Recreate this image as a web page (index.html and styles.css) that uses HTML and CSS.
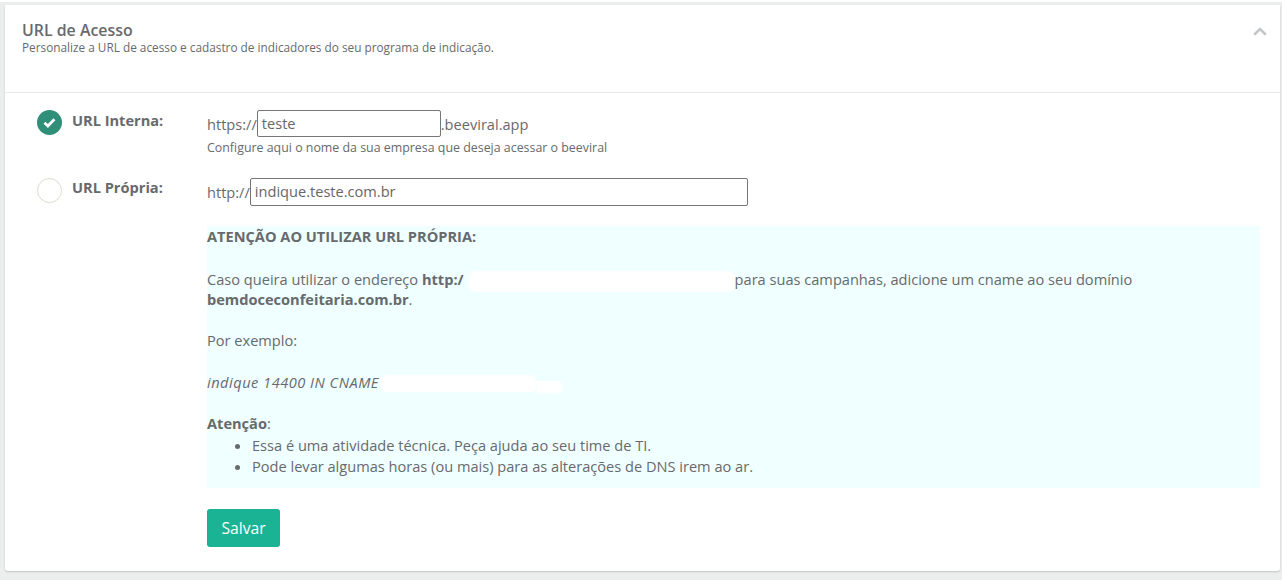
FILE: index.html
```html
<!DOCTYPE html>
<html lang="pt-BR">
<head>
<meta charset="utf-8">
<title>URL de Acesso</title>
<link rel="stylesheet" href="styles.css">
</head>
<body>
<section class="card">
  <header class="card-head">
    <div>
      <h5 class="card-title">URL de Acesso</h5>
      <p class="card-sub">Personalize a URL de acesso e cadastro de indicadores do seu programa de indicação.</p>
    </div>
    <svg class="chevron" width="14" height="9" viewBox="0 0 14 9"><path d="M1.200 7.700 7 2l5.800 5.700" fill="none" stroke="#c4c6c9" stroke-width="2.600"/></svg>
  </header>
  <div class="card-body">
    <div class="row row-internal">
      <div class="option">
        <span class="radio radio-on"><svg width="25" height="25" viewBox="0 0 25 25"><path d="M7.500 12.800l3.400 3.200 6.500-6.700" fill="none" stroke="#fff" stroke-width="2.700"/></svg></span>
        <label class="option-label">URL Interna:</label>
      </div>
      <div class="field">
        <div class="url-line">
          <span>https://</span><span class="input input-short">teste</span><span>.beeviral.app</span>
        </div>
        <p class="hint">Configure aqui o nome da sua empresa que deseja acessar o beeviral</p>
      </div>
    </div>
    <div class="row row-own">
      <div class="option">
        <span class="radio"></span>
        <label class="option-label option-label-own">URL Própria:</label>
      </div>
      <div class="field">
        <div class="url-line">
          <span>http://</span><span class="input input-long">indique.teste.com.br</span>
        </div>
      </div>
    </div>
    <div class="notice">
      <p class="notice-head"><strong>ATENÇÃO AO UTILIZAR URL PRÓPRIA:</strong></p>
      <p class="notice-text">Caso queira utilizar o endereço <strong>http:/</strong><span class="redact redact-url"></span>para suas campanhas, adicione um cname ao seu domínio<br><strong>bemdoceconfeitaria.com.br</strong>.</p>
      <p class="notice-text">Por exemplo:</p>
      <p class="notice-text"><em class="cname">indique 14400 IN CNAME</em><span class="redact redact-cname"></span><span class="redact redact-tail"></span></p>
      <p class="notice-text"><strong>Atenção</strong>:</p>
      <ul class="notice-list">
        <li>Essa é uma atividade técnica. Peça ajuda ao seu time de TI.</li>
        <li>Pode levar algumas horas (ou mais) para as alterações de DNS irem ao ar.</li>
      </ul>
    </div>
    <button class="save" type="button">Salvar</button>
  </div>
</section>
</body>
</html>
```
FILE: styles.css
```css
* { box-sizing: border-box; }
html, body { height: 100%; }
body {
  margin: 0;
  padding: 5px 2px 0 5px;
  overflow: hidden;
  background: linear-gradient(#fff 0 2px, #eceded 2px);
  font-family: "Open Sans", sans-serif;
  font-size: 14.600px;
  color: #676a6c;
}
.card {
  height: 566px;
  background: #fff;
  box-shadow: 0 1px 2px rgba(0, 0, 0, .18);
  border-radius: 0 0 3px 3px;
}
.card-head {
  height: 88px;
  border-bottom: 1px solid #e7eaec;
  padding: 15px 13px 0 17px;
  display: flex;
  justify-content: space-between;
  align-items: flex-start;
}
.card-title {
  margin: 0;
  font-size: 15.900px;
  line-height: 20px;
  font-weight: 600;
}
.card-sub {
  margin: 0;
  font-size: 11.800px;
  line-height: 15px;
}
.chevron { margin-top: 7px; }
.card-body { padding: 17px 20px 0 32px; }
.row { display: flex; }
.row-own { margin-top: 23px; }
.option {
  width: 170px;
  flex: none;
  display: flex;
  align-items: flex-start;
}
.radio {
  width: 25px;
  height: 25px;
  border-radius: 50%;
  border: 1px solid #dedbd3;
  background: #fff;
  flex: none;
}
.radio-on {
  background: #2f8f78;
  border: 0;
}
.radio svg { display: block; }
.option-label {
  margin: 0 0 0 10px;
  font-size: 14.600px;
  line-height: 20px;
  font-weight: 700;
}
.option-label-own { margin-top: -1px; }
.field { flex: 1; }
.url-line { display: flex; align-items: center; font-size: 14.600px; }
.input {
  height: 27px;
  border: 1px solid #767676;
  border-radius: 2px;
  padding: 0 4px;
  line-height: 25px;
  font-size: 14.600px;
  color: #666;
}
.input-short { width: 184px; }
.input-long { width: 498px; height: 28px; }
.hint {
  margin: 3px 0 0;
  font-size: 12.400px;
  line-height: 15px;
}
.notice {
  margin: 20px 0 0 170px;
  height: 262px;
  padding: 1.250px 0 0;
  background: #f0ffff;
  font-size: 14.600px;
  line-height: 19.500px;
}
.notice p { margin: 0; }
.notice .notice-text { margin-top: 22px; }
.notice .notice-head + .notice-text { margin-top: 23.500px; }
.notice strong { font-weight: 700; }
.cname { letter-spacing: .5px; }
.redact {
  display: inline-block;
  background: #fff;
  border-radius: 8px;
  vertical-align: middle;
  margin-block: -4px;
}
.redact-url { width: 267px; height: 21px; margin-left: 4px; }
.redact-cname { width: 157px; height: 17px; margin-left: 1px; }
.redact-tail { width: 26px; height: 12px; border-radius: 0 6px 6px 0; transform: translateY(3px); }
.notice-list { margin: 1.500px 0 0; padding: 0 0 0 45px; line-height: 20.500px; }
.save {
  display: block;
  margin: 21px 0 0 170px;
  width: 73px;
  height: 38px;
  border: 0;
  border-radius: 3px;
  background: #1ab394;
  color: #fff;
  font: 15.700px "Open Sans", sans-serif;
}
```
